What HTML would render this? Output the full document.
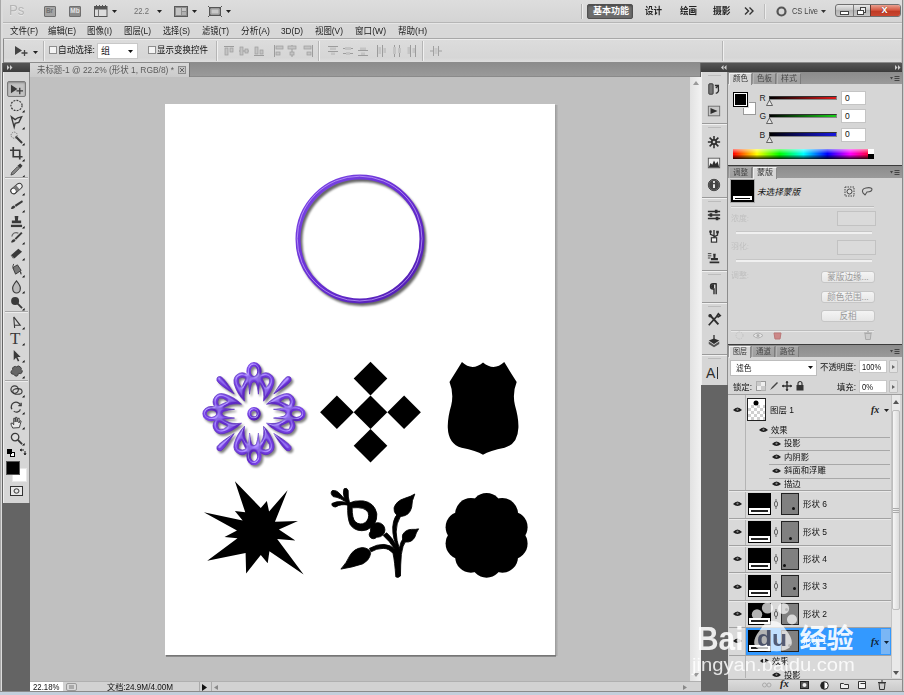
<!DOCTYPE html><html lang="zh-CN"><head><meta charset="utf-8"><title>Photoshop</title><style>
*{box-sizing:border-box;margin:0;padding:0}
html,body{width:904px;height:695px;overflow:hidden;background:#d4d4d4}
body{font-family:"Liberation Sans","Noto Sans CJK SC",sans-serif;font-size:11px;color:#111;position:relative}
.a{position:absolute}
.t{position:absolute;white-space:nowrap;line-height:1}
svg{position:absolute;overflow:visible}
</style></head><body>
<div class="a" style="left:0px;top:0px;width:904px;height:22px;background:linear-gradient(#dddddd,#d4d4d4);"></div>
<div class="a" style="left:0px;top:22px;width:904px;height:1px;background:#b6b6b6;"></div>
<div class="a" style="left:0px;top:23px;width:904px;height:1px;background:#e6e6e6;"></div>
<div class="a" style="left:0px;top:24px;width:904px;height:15px;background:#d8d8d8;"></div>
<div class="a" style="left:0px;top:38px;width:904px;height:1px;background:#a8a8a8;"></div>
<div class="a" style="left:3px;top:39px;width:899px;height:24px;background:linear-gradient(#dcdcdc,#d6d6d6 80%,#dedede);border:1px solid #c4c4c4;border-top-color:#ececec;border-bottom-color:#8c8c8c"></div>
<div class="a" style="left:0px;top:0px;width:1px;height:695px;background:#a8a8a8;"></div>
<div class="a" style="left:1px;top:0px;width:2px;height:695px;background:#dcdcdc;"></div>
<div class="a" style="left:3px;top:39px;width:1px;height:653px;background:#8a8a8a;"></div>
<div class="a" style="left:902px;top:0px;width:1px;height:695px;background:#8a8a8a;"></div>
<div class="a" style="left:903px;top:0px;width:1px;height:695px;background:#cdcdcd;"></div>
<div class="a" style="left:2px;top:63px;width:900px;height:628px;background:#646464;"></div>
<div class="a" style="left:30px;top:63px;width:670px;height:14px;background:linear-gradient(#8c8c8c,#9b9b9b);"></div>
<div class="a" style="left:30px;top:76px;width:670px;height:1px;background:#8a8a8a;"></div>
<div class="a" style="left:30px;top:77px;width:660px;height:604px;background:#c0c0c0;"></div>
<div class="a" style="left:690px;top:77px;width:11px;height:604px;background:linear-gradient(90deg,#e2e2e2,#f2f2f2);"></div>
<div class="t" style="left:9px;top:2px;font-size:15.5px;color:#b6b6b6;text-shadow:0 1px 0 #e6e6e6;transform-origin:0 50%;transform:scaleX(0.857);">Ps</div>
<div class="t" style="left:43.5px;top:6px;width:12px;height:10.5px;border:1px solid #6e6e6e;background:#a4a4a4;color:#707070;font-size:6.5px;font-weight:bold;line-height:8.5px;text-align:center;border-radius:1px">Br</div>
<div class="t" style="left:69px;top:6px;width:12px;height:10.5px;border:1px solid #6e6e6e;background:#8c8c8c;color:#e4e4e4;font-size:6.5px;font-weight:bold;line-height:8.5px;text-align:center;border-radius:1px">Mb</div>
<svg style="left:94px;top:5px;" width="14" height="12" viewBox="0 0 14 12"><rect x="0.5" y="1.5" width="12.5" height="10" fill="#dcdcdc" stroke="#555"/><rect x="0.5" y="1.5" width="12.5" height="3" fill="#555"/><path d="M4.5 4.5v7" stroke="#777" stroke-width="1"/><path d="M2.5 0v2M5.5 0v2M8.5 0v2M11.5 0v2" stroke="#555"/></svg>
<svg style="left:112px;top:10px;" width="5" height="3" viewBox="0 0 5 3"><polygon points="0,0 5,0 2.5,3" fill="#222"/></svg>
<div class="t" style="left:134px;top:7px;font-size:8.5px;color:#6e6e6e;transform-origin:0 50%;transform:scaleX(0.907);">22.2</div>
<svg style="left:156.5px;top:10px;" width="5" height="3" viewBox="0 0 5 3"><polygon points="0,0 5,0 2.5,3" fill="#222"/></svg>
<svg style="left:174px;top:5.5px;" width="14" height="11" viewBox="0 0 14 11"><rect x="0.5" y="0.5" width="13" height="10" fill="#8e8e8e" stroke="#5a5a5a"/><rect x="2" y="2" width="5" height="7" fill="#c4c4c4"/><rect x="8" y="2" width="4" height="3" fill="#c4c4c4"/><rect x="8" y="6" width="4" height="3" fill="#b0b0b0"/></svg>
<svg style="left:192px;top:10px;" width="5" height="3" viewBox="0 0 5 3"><polygon points="0,0 5,0 2.5,3" fill="#222"/></svg>
<svg style="left:208px;top:5.5px;" width="14" height="11" viewBox="0 0 14 11"><rect x="1.5" y="1.5" width="11" height="8" fill="#9a9a9a" stroke="#555"/><rect x="3.5" y="3.5" width="7" height="4" fill="#c8c8c8"/><path d="M0 0l2.5 2.5M14 0l-2.5 2.5M0 11l2.5-2.5M14 11l-2.5-2.5" stroke="#555"/></svg>
<svg style="left:226px;top:10px;" width="5" height="3" viewBox="0 0 5 3"><polygon points="0,0 5,0 2.5,3" fill="#222"/></svg>
<div class="a" style="left:581px;top:4px;width:1px;height:15px;background:#b0b0b0;"></div>
<div class="a" style="left:582px;top:4px;width:1px;height:15px;background:#ececec;"></div>
<div class="a" style="left:587px;top:4px;width:46px;height:15px;background:#6c6c6c;border:1px solid #505050;border-radius:2px;box-shadow:inset 0 1px 2px rgba(0,0,0,.35)"></div>
<div class="t" style="left:593px;top:7px;font-size:9px;color:#fff;font-weight:bold;transform-origin:0 50%;transform:scaleX(1.000);">基本功能</div>
<div class="t" style="left:645px;top:7px;font-size:9px;color:#222;font-weight:bold;transform-origin:0 50%;transform:scaleX(0.944);">设计</div>
<div class="t" style="left:679.5px;top:7px;font-size:9px;color:#222;font-weight:bold;transform-origin:0 50%;transform:scaleX(0.944);">绘画</div>
<div class="t" style="left:713px;top:7px;font-size:9px;color:#222;font-weight:bold;transform-origin:0 50%;transform:scaleX(0.971);">摄影</div>
<svg style="left:744px;top:7px;" width="10" height="8" viewBox="0 0 10 8"><path d="M1 0.5l3.5 3.5-3.5 3.5M5.5 0.5l3.5 3.5-3.5 3.5" fill="none" stroke="#333" stroke-width="1.4"/></svg>
<div class="a" style="left:764px;top:4px;width:1px;height:15px;background:#bcbcbc;"></div>
<div class="a" style="left:765px;top:4px;width:1px;height:15px;background:#ececec;"></div>
<svg style="left:776px;top:6px;" width="11" height="11" viewBox="0 0 11 11"><circle cx="5.5" cy="5.5" r="4" fill="none" stroke="#555" stroke-width="2.2"/></svg>
<div class="t" style="left:791.5px;top:7px;font-size:8.5px;color:#444;transform-origin:0 50%;transform:scaleX(0.873);">CS Live</div>
<svg style="left:821px;top:10px;" width="5" height="3" viewBox="0 0 5 3"><polygon points="0,0 5,0 2.5,3" fill="#333"/></svg>
<div class="a" style="left:834.5px;top:4px;width:66.5px;height:13px;border:1px solid #707070;border-radius:3px;background:linear-gradient(#e8e8e8,#c4c4c4 45%,#b4b4b4 50%,#c8c8c8);overflow:hidden"><div class="a" style="left:17px;top:0;width:1px;height:12px;background:#7a7a7a"></div><div class="a" style="left:34.5px;top:0;width:31px;height:12px;background:linear-gradient(#e8a090,#d4533c 45%,#bf3a24 50%,#cc4a34);border-left:1px solid #6b3a30"></div><div class="a" style="left:4.5px;top:5.5px;width:9px;height:4px;border:1px solid #444;background:#fff"></div><div class="a" style="left:24px;top:2px;width:6.5px;height:5.5px;border:1px solid #444;background:#eee"></div><div class="a" style="left:21.5px;top:4.5px;width:6.5px;height:5px;border:1px solid #444;background:#fff"></div><div class="t" style="left:46px;top:-1.5px;font-size:11px;font-weight:bold;color:#fff;text-shadow:0 0 1px #500">x</div></div>
<div class="t" style="left:10px;top:25.5px;font-size:9.5px;color:#222;transform-origin:0 50%;transform:scaleX(0.899);">文件(F)</div>
<div class="t" style="left:48px;top:25.5px;font-size:9.5px;color:#222;transform-origin:0 50%;transform:scaleX(0.884);">编辑(E)</div>
<div class="t" style="left:87px;top:25.5px;font-size:9.5px;color:#222;transform-origin:0 50%;transform:scaleX(0.894);">图像(I)</div>
<div class="t" style="left:124px;top:25.5px;font-size:9.5px;color:#222;transform-origin:0 50%;transform:scaleX(0.882);">图层(L)</div>
<div class="t" style="left:163px;top:25.5px;font-size:9.5px;color:#222;transform-origin:0 50%;transform:scaleX(0.852);">选择(S)</div>
<div class="t" style="left:202px;top:25.5px;font-size:9.5px;color:#222;transform-origin:0 50%;transform:scaleX(0.867);">滤镜(T)</div>
<div class="t" style="left:241px;top:25.5px;font-size:9.5px;color:#222;transform-origin:0 50%;transform:scaleX(0.916);">分析(A)</div>
<div class="t" style="left:281px;top:25.5px;font-size:9.5px;color:#222;transform-origin:0 50%;transform:scaleX(0.868);">3D(D)</div>
<div class="t" style="left:315px;top:25.5px;font-size:9.5px;color:#222;transform-origin:0 50%;transform:scaleX(0.884);">视图(V)</div>
<div class="t" style="left:355px;top:25.5px;font-size:9.5px;color:#222;transform-origin:0 50%;transform:scaleX(0.904);">窗口(W)</div>
<div class="t" style="left:398px;top:25.5px;font-size:9.5px;color:#222;transform-origin:0 50%;transform:scaleX(0.901);">帮助(H)</div>
<svg style="left:14px;top:45px;" width="14" height="12" viewBox="0 0 14 12"><polygon points="1,1 1,10 8,5.5" fill="#444"/><path d="M10.5 5v6M7.5 8h6" stroke="#444" stroke-width="1.3"/></svg>
<svg style="left:33px;top:51px;" width="5" height="3" viewBox="0 0 5 3"><polygon points="0,0 5,0 2.5,3" fill="#222"/></svg>
<div class="a" style="left:43px;top:41px;width:1px;height:20px;background:#b5b5b5;"></div>
<div class="a" style="left:44px;top:41px;width:1px;height:20px;background:#f0f0f0;"></div>
<div class="a" style="left:49px;top:46px;width:8px;height:8px;background:#f4f4f4;border:1px solid #8e8e8e"></div>
<div class="t" style="left:58px;top:46px;font-size:9px;color:#111;transform-origin:0 50%;transform:scaleX(0.961);">自动选择:</div>
<div class="a" style="left:97px;top:43px;width:41px;height:16px;background:#fff;border:1px solid #c8c8c8"></div>
<div class="t" style="left:101px;top:47px;font-size:9px;color:#111;">组</div>
<svg style="left:128px;top:50px;" width="5" height="3" viewBox="0 0 5 3"><polygon points="0,0 5,0 2.5,3" fill="#111"/></svg>
<div class="a" style="left:148px;top:46px;width:8px;height:8px;background:#f4f4f4;border:1px solid #8e8e8e"></div>
<div class="t" style="left:157px;top:46px;font-size:9px;color:#111;transform-origin:0 50%;transform:scaleX(0.944);">显示变换控件</div>
<div class="a" style="left:216px;top:41px;width:1px;height:20px;background:#b5b5b5;"></div>
<div class="a" style="left:217px;top:41px;width:1px;height:20px;background:#f0f0f0;"></div>
<svg style="left:224px;top:45px;" width="10" height="12" viewBox="0 0 10 12"><path d="M0 1.5h10" stroke="#9c9c9c"/><rect x="1" y="3" width="3" height="7" fill="#c4c4c4" stroke="#9c9c9c" stroke-width=".7"/><rect x="6" y="3" width="3" height="4" fill="#c4c4c4" stroke="#9c9c9c" stroke-width=".7"/></svg>
<svg style="left:239px;top:45px;" width="10" height="12" viewBox="0 0 10 12"><path d="M0 6h10" stroke="#9c9c9c"/><rect x="1" y="2" width="3" height="8" fill="#c4c4c4" stroke="#9c9c9c" stroke-width=".7"/><rect x="6" y="4" width="3" height="4" fill="#c4c4c4" stroke="#9c9c9c" stroke-width=".7"/></svg>
<svg style="left:254px;top:45px;" width="10" height="12" viewBox="0 0 10 12"><path d="M0 10.5h10" stroke="#9c9c9c"/><rect x="1" y="2" width="3" height="7" fill="#c4c4c4" stroke="#9c9c9c" stroke-width=".7"/><rect x="6" y="5" width="3" height="4" fill="#c4c4c4" stroke="#9c9c9c" stroke-width=".7"/></svg>
<svg style="left:273px;top:45px;" width="10" height="12" viewBox="0 0 10 12"><path d="M1.5 0v12" stroke="#9c9c9c"/><rect x="3" y="1" width="7" height="3" fill="#c4c4c4" stroke="#9c9c9c" stroke-width=".7"/><rect x="3" y="7" width="4" height="3" fill="#c4c4c4" stroke="#9c9c9c" stroke-width=".7"/></svg>
<svg style="left:287px;top:45px;" width="10" height="12" viewBox="0 0 10 12"><path d="M5 0v12" stroke="#9c9c9c"/><rect x="1" y="1" width="8" height="3" fill="#c4c4c4" stroke="#9c9c9c" stroke-width=".7"/><rect x="3" y="7" width="4" height="3" fill="#c4c4c4" stroke="#9c9c9c" stroke-width=".7"/></svg>
<svg style="left:303px;top:45px;" width="10" height="12" viewBox="0 0 10 12"><path d="M9.5 0v12" stroke="#9c9c9c"/><rect x="1" y="1" width="7" height="3" fill="#c4c4c4" stroke="#9c9c9c" stroke-width=".7"/><rect x="4" y="7" width="4" height="3" fill="#c4c4c4" stroke="#9c9c9c" stroke-width=".7"/></svg>
<svg style="left:328px;top:45px;" width="10" height="12" viewBox="0 0 10 12"><path d="M0 1.5h10M0 6.5h10" stroke="#9c9c9c"/><rect x="2" y="2.5" width="6" height="2.5" fill="#c4c4c4"/><rect x="3" y="7.5" width="4" height="2.5" fill="#c4c4c4"/></svg>
<svg style="left:343px;top:45px;" width="10" height="12" viewBox="0 0 10 12"><path d="M0 3.5h10M0 8.5h10" stroke="#9c9c9c"/><rect x="2" y="2" width="6" height="3" fill="#c4c4c4"/><rect x="3" y="7" width="4" height="3" fill="#c4c4c4"/></svg>
<svg style="left:358px;top:45px;" width="10" height="12" viewBox="0 0 10 12"><path d="M0 5.5h10M0 10.5h10" stroke="#9c9c9c"/><rect x="2" y="2.5" width="6" height="2.5" fill="#c4c4c4"/><rect x="3" y="7.5" width="4" height="2.5" fill="#c4c4c4"/></svg>
<svg style="left:376px;top:45px;" width="10" height="12" viewBox="0 0 10 12"><path d="M1.5 0v12M6.5 0v12" stroke="#9c9c9c"/><rect x="2.5" y="2" width="2.5" height="7" fill="#c4c4c4"/><rect x="7.5" y="3" width="2.5" height="5" fill="#c4c4c4"/></svg>
<svg style="left:391px;top:45px;" width="10" height="12" viewBox="0 0 10 12"><path d="M3.5 0v12M8.5 0v12" stroke="#9c9c9c"/><rect x="2" y="2" width="3" height="7" fill="#c4c4c4"/><rect x="7" y="3" width="3" height="5" fill="#c4c4c4"/></svg>
<svg style="left:406px;top:45px;" width="10" height="12" viewBox="0 0 10 12"><path d="M4.5 0v12M9.5 0v12" stroke="#9c9c9c"/><rect x="1.5" y="2" width="2.5" height="7" fill="#c4c4c4"/><rect x="6.5" y="3" width="2.5" height="5" fill="#c4c4c4"/></svg>
<div class="a" style="left:318px;top:41px;width:1px;height:20px;background:#b5b5b5;"></div>
<div class="a" style="left:319px;top:41px;width:1px;height:20px;background:#f0f0f0;"></div>
<div class="a" style="left:422px;top:41px;width:1px;height:20px;background:#b5b5b5;"></div>
<div class="a" style="left:423px;top:41px;width:1px;height:20px;background:#f0f0f0;"></div>
<svg style="left:430px;top:45px;" width="12" height="12" viewBox="0 0 12 12"><path d="M3.5 1v10M8.5 1v10" stroke="#a0a0a0"/><path d="M0 6h3M12 6h-3" stroke="#a0a0a0"/><rect x="4.5" y="3" width="3" height="6" fill="#c8c8c8"/></svg>
<div class="a" style="left:722px;top:41px;width:1px;height:20px;background:#b5b5b5;"></div>
<div class="a" style="left:723px;top:41px;width:1px;height:20px;background:#f0f0f0;"></div>
<div class="a" style="left:30px;top:63px;width:160px;height:14px;background:linear-gradient(#d8d8d8,#cbcbcb);border-right:1px solid #777"></div>
<div class="t" style="left:37px;top:66px;font-size:9px;color:#5a5a5a;transform-origin:0 50%;transform:scaleX(0.934);">未标题-1 @ 22.2% (形状 1, RGB/8) *</div>
<div class="a" style="left:178px;top:66px;width:8px;height:8px;background:#c4c4c4;border:1px solid #8a8a8a"></div>
<svg style="left:180px;top:68px;" width="4" height="4" viewBox="0 0 4 4"><path d="M0 0l4 4M4 0l-4 4" stroke="#666" stroke-width="1"/></svg>
<svg style="left:693px;top:81px;" width="6" height="5" viewBox="0 0 6 5"><polygon points="3,0 6,4 0,4" fill="#9a9a9a"/></svg>
<svg style="left:693px;top:673px;" width="6" height="5" viewBox="0 0 6 5"><polygon points="0,0 6,0 3,4" fill="#9a9a9a"/></svg>
<div class="a" style="left:30px;top:681px;width:671px;height:11px;background:#d2d2d2;border-top:1px solid #b0b0b0"></div>
<div class="a" style="left:30px;top:682px;width:33px;height:10px;background:#fff;"></div>
<div class="t" style="left:32.5px;top:683px;font-size:8.5px;color:#111;transform-origin:0 50%;transform:scaleX(0.919);">22.18%</div>
<div class="a" style="left:66px;top:683px;width:11px;height:8px;background:#d8d8d8;border:1px solid #999;border-radius:2px"></div>
<div class="a" style="left:69px;top:685px;width:5px;height:4px;background:#aaa;"></div>
<div class="t" style="left:106.5px;top:683px;font-size:8.5px;color:#111;transform-origin:0 50%;transform:scaleX(0.957);">文档:24.9M/4.00M</div>
<svg style="left:202px;top:683.5px;" width="6" height="7" viewBox="0 0 6 7"><polygon points="0,0 5,3.5 0,7" fill="#111"/></svg>
<div class="a" style="left:199px;top:682px;width:1px;height:10px;background:#aaa;"></div>
<div class="a" style="left:211px;top:682px;width:1px;height:10px;background:#aaa;"></div>
<svg style="left:214px;top:684.5px;" width="5" height="5" viewBox="0 0 5 5"><polygon points="4,0 4,5 0,2.5" fill="#888"/></svg>
<svg style="left:683px;top:684.5px;" width="5" height="5" viewBox="0 0 5 5"><polygon points="0,0 0,5 4,2.5" fill="#888"/></svg>
<div class="a" style="left:555px;top:105px;width:3px;height:551px;background:linear-gradient(90deg,#9a9a9a,#bababa);"></div>
<div class="a" style="left:166px;top:655px;width:390px;height:2px;background:linear-gradient(#6c6c6c,#969696);"></div>
<div class="a" style="left:165px;top:104px;width:390px;height:551px;background:#fff;"></div>
<svg style="left:0px;top:0px;" width="904" height="695" viewBox="0 0 904 695"><defs>
<filter id="ds" x="-20%" y="-20%" width="140%" height="140%"><feGaussianBlur stdDeviation="1.2"/></filter><filter id="bev" x="-10%" y="-10%" width="120%" height="120%"><feGaussianBlur in="SourceAlpha" stdDeviation="0.9" result="b"/><feSpecularLighting in="b" surfaceScale="2.5" specularConstant="0.45" specularExponent="10" lighting-color="#e0d0ff" result="s"><feDistantLight azimuth="235" elevation="42"/></feSpecularLighting><feComposite in="s" in2="SourceAlpha" operator="in" result="s2"/><feComposite in="SourceGraphic" in2="s2" operator="arithmetic" k1="0" k2="1" k3="1" k4="0"/></filter>
<linearGradient id="pg" x1="0" y1="0" x2="1" y2="1"><stop offset="0" stop-color="#7c48e6"/><stop offset=".5" stop-color="#672dd3"/><stop offset="1" stop-color="#4f1cae"/></linearGradient>
</defs><circle cx="362" cy="241.5" r="62" fill="none" stroke="#000" stroke-opacity=".6" stroke-width="4.8" filter="url(#ds)"/><circle cx="360" cy="239" r="62" fill="none" stroke="url(#pg)" stroke-width="5"/><circle cx="359.6" cy="238.6" r="62.4" fill="none" stroke="#c9a8ff" stroke-opacity=".7" stroke-width="1"/><polygon points="353.7,412.2 370.5,395.4 387.3,412.2 370.5,429.0" fill="#000"/><polygon points="320.1,412.2 336.9,395.4 353.7,412.2 336.9,429.0" fill="#000"/><polygon points="387.3,412.2 404.1,395.4 420.9,412.2 404.1,429.0" fill="#000"/><polygon points="353.7,378.6 370.5,361.8 387.3,378.6 370.5,395.4" fill="#000"/><polygon points="353.7,445.8 370.5,429.0 387.3,445.8 370.5,462.6" fill="#000"/><g transform="translate(430,350) scale(0.17266)"><path d="M185,70 Q245,125 307,72 Q370,125 430,70 Q468,132 502,185 Q476,250 492,320 Q514,395 512,450 Q508,545 432,566 Q345,584 307,606 Q269,584 183,566 Q107,545 103,450 Q101,395 123,320 Q139,250 113,185 Q147,132 185,70Z" fill="#000"/></g><g transform="translate(190,470) scale(0.17266)"><polygon points="260,65 410,220 445,180 458,240 565,118 492,300 625,295 515,345 610,408 505,400 658,605 460,470 450,540 410,492 325,600 322,480 100,525 275,395 200,388 272,350 80,245 305,292 260,238 320,245" fill="#000"/></g><circle cx="486.6" cy="535.4" r="29.6" fill="#000"/><circle cx="486.6" cy="508.8" r="15.7" fill="#000"/><circle cx="470.9" cy="513.8" r="15.7" fill="#000"/><circle cx="461.3" cy="527.2" r="15.7" fill="#000"/><circle cx="461.3" cy="543.6" r="15.7" fill="#000"/><circle cx="470.9" cy="557.0" r="15.7" fill="#000"/><circle cx="486.6" cy="562.0" r="15.7" fill="#000"/><circle cx="502.3" cy="557.0" r="15.7" fill="#000"/><circle cx="511.9" cy="543.6" r="15.7" fill="#000"/><circle cx="511.9" cy="527.2" r="15.7" fill="#000"/><circle cx="502.3" cy="513.8" r="15.7" fill="#000"/><g transform="translate(315,475) scale(0.17266)" fill="#000" stroke="#000" stroke-width="5" stroke-linejoin="round">
<path d="M468,590 Q462,500 452,455 Q430,425 395,425 Q355,425 325,445 L315,425 Q360,400 400,402 Q440,405 462,430 Q430,380 395,350 L415,335 Q450,365 470,410 Q440,330 455,270 Q465,235 480,225 L495,240 Q470,280 470,330 Q472,380 488,425 Q495,385 515,360 L530,375 Q505,410 500,460 Q495,520 495,585 Q482,598 468,590Z"/>
<path d="M578,110 Q560,150 560,185 Q550,235 500,240 Q455,235 458,190 Q470,150 520,135 Q555,125 578,110Z"/>
<path d="M600,312 Q585,335 578,360 Q560,392 525,388 Q500,375 508,345 Q525,315 560,315 Q585,316 600,312Z"/>
<path d="M150,545 Q185,505 200,470 Q225,425 275,420 Q320,425 322,455 Q315,495 275,515 Q215,535 150,545Z"/>
<circle cx="363" cy="318" r="42"/><circle cx="338" cy="345" r="24"/>
<path d="M190,165 Q230,145 280,150 Q345,160 358,225 Q362,290 300,318 Q240,335 205,290 Q185,250 190,165Z M215,190 Q215,250 232,270 Q260,295 292,275 Q318,252 308,218 Q292,183 215,190Z" fill-rule="evenodd"/>
<path d="M195,170 Q150,130 105,125 Q85,105 100,90 Q125,85 150,115 Q160,130 170,135 Q160,100 168,80 Q185,70 192,90 Q190,130 200,160Z"/>
<path d="M195,175 Q150,165 120,185 Q95,185 98,165 Q125,150 160,155 Q185,158 200,165Z"/>
</g><g opacity=".5" filter="url(#ds)"><g transform="translate(255.8,415.7)" fill="#000" stroke="#000" stroke-width=".7" stroke-linejoin="round" fill-rule="evenodd"><g transform="rotate(0)"><ellipse cx="0" cy="-42.5" rx="5.4" ry="6.9" fill="none" stroke="#000" stroke-width="4.4"/><path d="M-6,-36 L-4.4,-19.5 Q-3.6,-27 -2.4,-30 Q0,-34 2.4,-30 Q3.600,-27 4.4,-19.5 L6,-36Z"/><g transform="scale(1,1)"><path d="M-4.5,-36.5 Q-9,-42.5 -14.5,-40.5 Q-21.5,-37.5 -19.800,-30 Q-17,-20 -9.5,-12.5 Q-10.800,-22 -7.5,-27.5 Q-5,-31 -4.5,-36.5Z M-8,-35.300 Q-12,-37.5 -15.600,-35 Q-16.800,-31 -12.300,-26 Q-10.200,-31 -8,-35.300Z"/></g><g transform="scale(-1,1)"><path d="M-4.5,-36.5 Q-9,-42.5 -14.5,-40.5 Q-21.5,-37.5 -19.800,-30 Q-17,-20 -9.5,-12.5 Q-10.800,-22 -7.5,-27.5 Q-5,-31 -4.5,-36.5Z M-8,-35.300 Q-12,-37.5 -15.600,-35 Q-16.800,-31 -12.300,-26 Q-10.200,-31 -8,-35.300Z"/></g></g><g transform="rotate(90)"><ellipse cx="0" cy="-42.5" rx="5.4" ry="6.9" fill="none" stroke="#000" stroke-width="4.4"/><path d="M-6,-36 L-4.4,-19.5 Q-3.6,-27 -2.4,-30 Q0,-34 2.4,-30 Q3.600,-27 4.4,-19.5 L6,-36Z"/><g transform="scale(1,1)"><path d="M-4.5,-36.5 Q-9,-42.5 -14.5,-40.5 Q-21.5,-37.5 -19.800,-30 Q-17,-20 -9.5,-12.5 Q-10.800,-22 -7.5,-27.5 Q-5,-31 -4.5,-36.5Z M-8,-35.300 Q-12,-37.5 -15.600,-35 Q-16.800,-31 -12.300,-26 Q-10.200,-31 -8,-35.300Z"/></g><g transform="scale(-1,1)"><path d="M-4.5,-36.5 Q-9,-42.5 -14.5,-40.5 Q-21.5,-37.5 -19.800,-30 Q-17,-20 -9.5,-12.5 Q-10.800,-22 -7.5,-27.5 Q-5,-31 -4.5,-36.5Z M-8,-35.300 Q-12,-37.5 -15.600,-35 Q-16.800,-31 -12.300,-26 Q-10.200,-31 -8,-35.300Z"/></g></g><g transform="rotate(180)"><ellipse cx="0" cy="-42.5" rx="5.4" ry="6.9" fill="none" stroke="#000" stroke-width="4.4"/><path d="M-6,-36 L-4.4,-19.5 Q-3.6,-27 -2.4,-30 Q0,-34 2.4,-30 Q3.600,-27 4.4,-19.5 L6,-36Z"/><g transform="scale(1,1)"><path d="M-4.5,-36.5 Q-9,-42.5 -14.5,-40.5 Q-21.5,-37.5 -19.800,-30 Q-17,-20 -9.5,-12.5 Q-10.800,-22 -7.5,-27.5 Q-5,-31 -4.5,-36.5Z M-8,-35.300 Q-12,-37.5 -15.600,-35 Q-16.800,-31 -12.300,-26 Q-10.200,-31 -8,-35.300Z"/></g><g transform="scale(-1,1)"><path d="M-4.5,-36.5 Q-9,-42.5 -14.5,-40.5 Q-21.5,-37.5 -19.800,-30 Q-17,-20 -9.5,-12.5 Q-10.800,-22 -7.5,-27.5 Q-5,-31 -4.5,-36.5Z M-8,-35.300 Q-12,-37.5 -15.600,-35 Q-16.800,-31 -12.300,-26 Q-10.200,-31 -8,-35.300Z"/></g></g><g transform="rotate(270)"><ellipse cx="0" cy="-42.5" rx="5.4" ry="6.9" fill="none" stroke="#000" stroke-width="4.4"/><path d="M-6,-36 L-4.4,-19.5 Q-3.6,-27 -2.4,-30 Q0,-34 2.4,-30 Q3.600,-27 4.4,-19.5 L6,-36Z"/><g transform="scale(1,1)"><path d="M-4.5,-36.5 Q-9,-42.5 -14.5,-40.5 Q-21.5,-37.5 -19.800,-30 Q-17,-20 -9.5,-12.5 Q-10.800,-22 -7.5,-27.5 Q-5,-31 -4.5,-36.5Z M-8,-35.300 Q-12,-37.5 -15.600,-35 Q-16.800,-31 -12.300,-26 Q-10.200,-31 -8,-35.300Z"/></g><g transform="scale(-1,1)"><path d="M-4.5,-36.5 Q-9,-42.5 -14.5,-40.5 Q-21.5,-37.5 -19.800,-30 Q-17,-20 -9.5,-12.5 Q-10.800,-22 -7.5,-27.5 Q-5,-31 -4.5,-36.5Z M-8,-35.300 Q-12,-37.5 -15.600,-35 Q-16.800,-31 -12.300,-26 Q-10.200,-31 -8,-35.300Z"/></g></g><g transform="rotate(45)"><path d="M0,-28 Q-4,-45 -2.800,-49.5 Q0,-53.5 2.800,-49.5 Q4,-45 0,-28Z"/></g><g transform="rotate(135)"><path d="M0,-28 Q-4,-45 -2.800,-49.5 Q0,-53.5 2.800,-49.5 Q4,-45 0,-28Z"/></g><g transform="rotate(225)"><path d="M0,-28 Q-4,-45 -2.800,-49.5 Q0,-53.5 2.800,-49.5 Q4,-45 0,-28Z"/></g><g transform="rotate(315)"><path d="M0,-28 Q-4,-45 -2.800,-49.5 Q0,-53.5 2.800,-49.5 Q4,-45 0,-28Z"/></g><circle cx="0" cy="0" r="4.7" fill="none" stroke="#000" stroke-width="4.2"/></g></g><g filter="url(#bev)"><g transform="translate(254,413.7)" fill="url(#pg)" stroke="#5a28c0" stroke-width=".7" stroke-linejoin="round" fill-rule="evenodd"><g transform="rotate(0)"><ellipse cx="0" cy="-42.5" rx="5.4" ry="6.9" fill="none" stroke="url(#pg)" stroke-width="4.4"/><path d="M-6,-36 L-4.4,-19.5 Q-3.6,-27 -2.4,-30 Q0,-34 2.4,-30 Q3.600,-27 4.4,-19.5 L6,-36Z"/><g transform="scale(1,1)"><path d="M-4.5,-36.5 Q-9,-42.5 -14.5,-40.5 Q-21.5,-37.5 -19.800,-30 Q-17,-20 -9.5,-12.5 Q-10.800,-22 -7.5,-27.5 Q-5,-31 -4.5,-36.5Z M-8,-35.300 Q-12,-37.5 -15.600,-35 Q-16.800,-31 -12.300,-26 Q-10.200,-31 -8,-35.300Z"/></g><g transform="scale(-1,1)"><path d="M-4.5,-36.5 Q-9,-42.5 -14.5,-40.5 Q-21.5,-37.5 -19.800,-30 Q-17,-20 -9.5,-12.5 Q-10.800,-22 -7.5,-27.5 Q-5,-31 -4.5,-36.5Z M-8,-35.300 Q-12,-37.5 -15.600,-35 Q-16.800,-31 -12.300,-26 Q-10.200,-31 -8,-35.300Z"/></g></g><g transform="rotate(90)"><ellipse cx="0" cy="-42.5" rx="5.4" ry="6.9" fill="none" stroke="url(#pg)" stroke-width="4.4"/><path d="M-6,-36 L-4.4,-19.5 Q-3.6,-27 -2.4,-30 Q0,-34 2.4,-30 Q3.600,-27 4.4,-19.5 L6,-36Z"/><g transform="scale(1,1)"><path d="M-4.5,-36.5 Q-9,-42.5 -14.5,-40.5 Q-21.5,-37.5 -19.800,-30 Q-17,-20 -9.5,-12.5 Q-10.800,-22 -7.5,-27.5 Q-5,-31 -4.5,-36.5Z M-8,-35.300 Q-12,-37.5 -15.600,-35 Q-16.800,-31 -12.300,-26 Q-10.200,-31 -8,-35.300Z"/></g><g transform="scale(-1,1)"><path d="M-4.5,-36.5 Q-9,-42.5 -14.5,-40.5 Q-21.5,-37.5 -19.800,-30 Q-17,-20 -9.5,-12.5 Q-10.800,-22 -7.5,-27.5 Q-5,-31 -4.5,-36.5Z M-8,-35.300 Q-12,-37.5 -15.600,-35 Q-16.800,-31 -12.300,-26 Q-10.200,-31 -8,-35.300Z"/></g></g><g transform="rotate(180)"><ellipse cx="0" cy="-42.5" rx="5.4" ry="6.9" fill="none" stroke="url(#pg)" stroke-width="4.4"/><path d="M-6,-36 L-4.4,-19.5 Q-3.6,-27 -2.4,-30 Q0,-34 2.4,-30 Q3.600,-27 4.4,-19.5 L6,-36Z"/><g transform="scale(1,1)"><path d="M-4.5,-36.5 Q-9,-42.5 -14.5,-40.5 Q-21.5,-37.5 -19.800,-30 Q-17,-20 -9.5,-12.5 Q-10.800,-22 -7.5,-27.5 Q-5,-31 -4.5,-36.5Z M-8,-35.300 Q-12,-37.5 -15.600,-35 Q-16.800,-31 -12.300,-26 Q-10.200,-31 -8,-35.300Z"/></g><g transform="scale(-1,1)"><path d="M-4.5,-36.5 Q-9,-42.5 -14.5,-40.5 Q-21.5,-37.5 -19.800,-30 Q-17,-20 -9.5,-12.5 Q-10.800,-22 -7.5,-27.5 Q-5,-31 -4.5,-36.5Z M-8,-35.300 Q-12,-37.5 -15.600,-35 Q-16.800,-31 -12.300,-26 Q-10.200,-31 -8,-35.300Z"/></g></g><g transform="rotate(270)"><ellipse cx="0" cy="-42.5" rx="5.4" ry="6.9" fill="none" stroke="url(#pg)" stroke-width="4.4"/><path d="M-6,-36 L-4.4,-19.5 Q-3.6,-27 -2.4,-30 Q0,-34 2.4,-30 Q3.600,-27 4.4,-19.5 L6,-36Z"/><g transform="scale(1,1)"><path d="M-4.5,-36.5 Q-9,-42.5 -14.5,-40.5 Q-21.5,-37.5 -19.800,-30 Q-17,-20 -9.5,-12.5 Q-10.800,-22 -7.5,-27.5 Q-5,-31 -4.5,-36.5Z M-8,-35.300 Q-12,-37.5 -15.600,-35 Q-16.800,-31 -12.300,-26 Q-10.200,-31 -8,-35.300Z"/></g><g transform="scale(-1,1)"><path d="M-4.5,-36.5 Q-9,-42.5 -14.5,-40.5 Q-21.5,-37.5 -19.800,-30 Q-17,-20 -9.5,-12.5 Q-10.800,-22 -7.5,-27.5 Q-5,-31 -4.5,-36.5Z M-8,-35.300 Q-12,-37.5 -15.600,-35 Q-16.800,-31 -12.300,-26 Q-10.200,-31 -8,-35.300Z"/></g></g><g transform="rotate(45)"><path d="M0,-28 Q-4,-45 -2.800,-49.5 Q0,-53.5 2.800,-49.5 Q4,-45 0,-28Z"/></g><g transform="rotate(135)"><path d="M0,-28 Q-4,-45 -2.800,-49.5 Q0,-53.5 2.800,-49.5 Q4,-45 0,-28Z"/></g><g transform="rotate(225)"><path d="M0,-28 Q-4,-45 -2.800,-49.5 Q0,-53.5 2.800,-49.5 Q4,-45 0,-28Z"/></g><g transform="rotate(315)"><path d="M0,-28 Q-4,-45 -2.800,-49.5 Q0,-53.5 2.800,-49.5 Q4,-45 0,-28Z"/></g><circle cx="0" cy="0" r="4.7" fill="none" stroke="url(#pg)" stroke-width="4.2"/></g></g></svg>
<div class="a" style="left:3px;top:63px;width:27px;height:9px;background:linear-gradient(#565656,#3c3c3c);"></div>
<svg style="left:7px;top:65px;" width="6" height="5" viewBox="0 0 6 5"><path d="M0 0l2.5 2.5-2.5 2.5zM3 0l2.5 2.5-2.5 2.5z" fill="#d0d0d0"/></svg>
<div class="a" style="left:3px;top:72px;width:27px;height:431px;background:#d6d6d6;border-right:1px solid #8a8a8a;border-left:1px solid #efefef"></div>
<div class="a" style="left:7px;top:81px;width:19px;height:16px;background:#c2c2c2;border:1px solid #7a7a7a;border-radius:2px;box-shadow:inset 0 1px 2px rgba(0,0,0,.3)"></div>
<svg style="left:9.5px;top:82.5px;" width="13" height="13" viewBox="0 0 14 14"><polygon points="1,2 1,11 8,6.5" fill="#3a3a3a"/><path d="M10.5 5v7M7 8.5h7" stroke="#3a3a3a" stroke-width="1.4"/></svg>
<svg style="left:9.5px;top:98.5px;" width="13" height="13" viewBox="0 0 14 14"><ellipse cx="7" cy="7" rx="6" ry="5.5" fill="none" stroke="#3a3a3a" stroke-width="1.3" stroke-dasharray="2 1.3"/></svg>
<svg style="left:21.7px;top:110px;" width="2.6" height="2.6" viewBox="0 0 2.6 2.6"><polygon points="2.6,0 2.6,2.6 0,2.6" fill="#111"/></svg>
<svg style="left:9.5px;top:115.0px;" width="13" height="13" viewBox="0 0 14 14"><path d="M1.5 2l4 3 3-2 4-1-3 6-4 1-1 4z" fill="none" stroke="#3a3a3a" stroke-width="1.5"/></svg>
<svg style="left:21.7px;top:126.5px;" width="2.6" height="2.6" viewBox="0 0 2.6 2.6"><polygon points="2.6,0 2.6,2.6 0,2.6" fill="#111"/></svg>
<svg style="left:9.5px;top:131.0px;" width="13" height="13" viewBox="0 0 14 14"><path d="M6 6l7 7" stroke="#3a3a3a" stroke-width="2.2"/><circle cx="4.5" cy="4.5" r="3.3" fill="none" stroke="#777" stroke-width="1" stroke-dasharray="1.5 1"/></svg>
<svg style="left:21.7px;top:142.5px;" width="2.6" height="2.6" viewBox="0 0 2.6 2.6"><polygon points="2.6,0 2.6,2.6 0,2.6" fill="#111"/></svg>
<svg style="left:9.5px;top:147.0px;" width="13" height="13" viewBox="0 0 14 14"><path d="M3.5 0v10.5h10M0 3.5h10.5v10" fill="none" stroke="#3a3a3a" stroke-width="1.8"/></svg>
<svg style="left:21.7px;top:158.5px;" width="2.6" height="2.6" viewBox="0 0 2.6 2.6"><polygon points="2.6,0 2.6,2.6 0,2.6" fill="#111"/></svg>
<svg style="left:9.5px;top:163.0px;" width="13" height="13" viewBox="0 0 14 14"><path d="M1 13l1-3 6-6 2 2-6 6z" fill="#888" stroke="#3a3a3a" stroke-width=".8"/><path d="M8 3l3-2.5 2.5 2.5-2.5 3z" fill="#3a3a3a"/></svg>
<svg style="left:21.7px;top:174.5px;" width="2.6" height="2.6" viewBox="0 0 2.6 2.6"><polygon points="2.6,0 2.6,2.6 0,2.6" fill="#111"/></svg>
<div class="a" style="left:5px;top:177px;width:23px;height:1px;background:#a8a8a8;"></div>
<div class="a" style="left:5px;top:178px;width:23px;height:1px;background:#ececec;"></div>
<svg style="left:9.5px;top:181.5px;" width="13" height="13" viewBox="0 0 14 14"><g transform="rotate(-40 7 7)"><rect x="0" y="4" width="14" height="6" rx="3" fill="#eee" stroke="#3a3a3a" stroke-width="1"/><rect x="0" y="4" width="6" height="6" rx="3" fill="#fff" stroke="#3a3a3a"/><rect x="5" y="4" width="4" height="6" fill="#777"/></g></svg>
<svg style="left:21.7px;top:193px;" width="2.6" height="2.6" viewBox="0 0 2.6 2.6"><polygon points="2.6,0 2.6,2.6 0,2.6" fill="#111"/></svg>
<svg style="left:9.5px;top:198.0px;" width="13" height="13" viewBox="0 0 14 14"><path d="M1 11.5q.5-3 3-3.5l2 1.5q-1.5 3-5 2z" fill="#3a3a3a"/><path d="M5 7.5l8-5 1 1.800-7.5 5z" fill="#3a3a3a"/></svg>
<svg style="left:21.7px;top:209.5px;" width="2.6" height="2.6" viewBox="0 0 2.6 2.6"><polygon points="2.6,0 2.6,2.6 0,2.6" fill="#111"/></svg>
<svg style="left:9.5px;top:214.5px;" width="13" height="13" viewBox="0 0 14 14"><path d="M5 1h4l-.5 5h3.5v3h-10v-3h3.5z" fill="#3a3a3a"/><rect x="1" y="10.5" width="12" height="2.5" fill="#3a3a3a"/></svg>
<svg style="left:21.7px;top:226px;" width="2.6" height="2.6" viewBox="0 0 2.6 2.6"><polygon points="2.6,0 2.6,2.6 0,2.6" fill="#111"/></svg>
<svg style="left:9.5px;top:230.5px;" width="13" height="13" viewBox="0 0 14 14"><path d="M1 12q1-3 3.5-3.5l1.5 1.5q-1 3-5 2z" fill="#3a3a3a"/><path d="M5 8l7-7 1.5 1.5-7 7z" fill="#3a3a3a"/><path d="M2 6a4.5 4.5 0 0 1 7-3.5" fill="none" stroke="#666" stroke-width="1.300"/></svg>
<svg style="left:21.7px;top:242px;" width="2.6" height="2.6" viewBox="0 0 2.6 2.6"><polygon points="2.6,0 2.6,2.6 0,2.6" fill="#111"/></svg>
<svg style="left:9.5px;top:246.5px;" width="13" height="13" viewBox="0 0 14 14"><path d="M1 9l8-7 4 3-8 7h-2z" fill="#3a3a3a"/><path d="M1 9l3 3" stroke="#999"/></svg>
<svg style="left:21.7px;top:258px;" width="2.6" height="2.6" viewBox="0 0 2.6 2.6"><polygon points="2.6,0 2.6,2.6 0,2.6" fill="#111"/></svg>
<svg style="left:9.5px;top:263.0px;" width="13" height="13" viewBox="0 0 14 14"><path d="M3 5l5-3 4 6-6 4z" fill="#777" stroke="#3a3a3a" stroke-width="1"/><path d="M4 1q-2 3 0 5" fill="none" stroke="#3a3a3a"/><path d="M11 8q2 2 1 5-2-2-1-5z" fill="#3a3a3a"/></svg>
<svg style="left:21.7px;top:274.5px;" width="2.6" height="2.6" viewBox="0 0 2.6 2.6"><polygon points="2.6,0 2.6,2.6 0,2.6" fill="#111"/></svg>
<svg style="left:9.5px;top:279.5px;" width="13" height="13" viewBox="0 0 14 14"><path d="M7 1q5 6 4 9a4 4 0 0 1-8 0q-1-3 4-9z" fill="#bbb" stroke="#3a3a3a" stroke-width="1.2"/></svg>
<svg style="left:21.7px;top:291px;" width="2.6" height="2.6" viewBox="0 0 2.6 2.6"><polygon points="2.6,0 2.6,2.6 0,2.6" fill="#111"/></svg>
<svg style="left:9.5px;top:296.0px;" width="13" height="13" viewBox="0 0 14 14"><circle cx="5.5" cy="5.5" r="4.300" fill="#3a3a3a"/><path d="M8 8l5 5" stroke="#3a3a3a" stroke-width="2"/></svg>
<svg style="left:21.7px;top:307.5px;" width="2.6" height="2.6" viewBox="0 0 2.6 2.6"><polygon points="2.6,0 2.6,2.6 0,2.6" fill="#111"/></svg>
<div class="a" style="left:5px;top:311px;width:23px;height:1px;background:#a8a8a8;"></div>
<div class="a" style="left:5px;top:312px;width:23px;height:1px;background:#ececec;"></div>
<svg style="left:9.5px;top:315.5px;" width="13" height="13" viewBox="0 0 14 14"><path d="M4 1l1 12M4 1l7 9-6 0" fill="none" stroke="#3a3a3a" stroke-width="1.2"/></svg>
<svg style="left:21.7px;top:327px;" width="2.6" height="2.6" viewBox="0 0 2.6 2.6"><polygon points="2.6,0 2.6,2.6 0,2.6" fill="#111"/></svg>
<div class="t" style="left:10px;top:330px;font-family:'Liberation Serif',serif;font-size:17px;color:#3a3a3a">T</div>
<svg style="left:21.7px;top:343px;" width="2.6" height="2.6" viewBox="0 0 2.6 2.6"><polygon points="2.6,0 2.6,2.6 0,2.6" fill="#111"/></svg>
<svg style="left:9.5px;top:348.5px;" width="13" height="13" viewBox="0 0 14 14"><path d="M4 1v11l2.5-2.5 2 4 1.5-.8-2-4h3.5z" fill="#3a3a3a"/></svg>
<svg style="left:21.7px;top:360px;" width="2.6" height="2.6" viewBox="0 0 2.6 2.6"><polygon points="2.6,0 2.6,2.6 0,2.6" fill="#111"/></svg>
<svg style="left:9.5px;top:364.5px;" width="13" height="13" viewBox="0 0 14 14"><path d="M7 2q2-2 4 0t1 3q2 1 1 3t-4 1q0 3-2 3t-3-2q-3 0-3-2t2-3q-1-2 1-3t3 0z" fill="#666" stroke="#3a3a3a" stroke-width="1"/></svg>
<svg style="left:21.7px;top:376px;" width="2.6" height="2.6" viewBox="0 0 2.6 2.6"><polygon points="2.6,0 2.6,2.6 0,2.6" fill="#111"/></svg>
<div class="a" style="left:5px;top:380px;width:23px;height:1px;background:#a8a8a8;"></div>
<div class="a" style="left:5px;top:381px;width:23px;height:1px;background:#ececec;"></div>
<svg style="left:9.5px;top:383.5px;" width="13" height="13" viewBox="0 0 14 14"><circle cx="5" cy="6" r="4" fill="none" stroke="#3a3a3a" stroke-width="1.300"/><ellipse cx="8" cy="8" rx="5" ry="3" fill="none" stroke="#3a3a3a" stroke-width="1.200"/></svg>
<svg style="left:21.7px;top:395px;" width="2.6" height="2.6" viewBox="0 0 2.6 2.6"><polygon points="2.6,0 2.6,2.6 0,2.6" fill="#111"/></svg>
<svg style="left:9.5px;top:400.0px;" width="13" height="13" viewBox="0 0 14 14"><path d="M2 10a5 5 0 0 1 9-5M12 3v3h-3" fill="none" stroke="#3a3a3a" stroke-width="1.400"/><path d="M4 12a4 3 0 0 0 7-2" fill="none" stroke="#3a3a3a" stroke-width="1.300"/></svg>
<svg style="left:21.7px;top:411.5px;" width="2.6" height="2.6" viewBox="0 0 2.6 2.6"><polygon points="2.6,0 2.6,2.6 0,2.6" fill="#111"/></svg>
<svg style="left:9.5px;top:415.5px;" width="13" height="13" viewBox="0 0 14 14"><path d="M3 13q-2-3-2-5l1.5-.5 1.5 2v-7h1.5v4l.5-5h1.5v5l1-4h1.5l-.5 5 1.5-2.5 1 .5q-1 4-2 7z" fill="#e8e8e8" stroke="#3a3a3a" stroke-width="1"/></svg>
<svg style="left:21.7px;top:427px;" width="2.6" height="2.6" viewBox="0 0 2.6 2.6"><polygon points="2.6,0 2.6,2.6 0,2.6" fill="#111"/></svg>
<svg style="left:9.5px;top:431.5px;" width="13" height="13" viewBox="0 0 14 14"><circle cx="5.5" cy="5.5" r="4" fill="#ddd" stroke="#3a3a3a" stroke-width="1.400"/><path d="M8.5 8.5l4.5 4.5" stroke="#3a3a3a" stroke-width="2"/></svg>
<svg style="left:21.7px;top:443px;" width="2.6" height="2.6" viewBox="0 0 2.6 2.6"><polygon points="2.6,0 2.6,2.6 0,2.6" fill="#111"/></svg>
<div class="a" style="left:7px;top:449px;width:5px;height:5px;background:#000;"></div>
<div class="a" style="left:10px;top:452px;width:5px;height:5px;background:#fff;border:1px solid #000"></div>
<div class="a" style="left:7px;top:449px;width:5px;height:5px;background:#000;"></div>
<svg style="left:19px;top:449px;" width="7" height="7" viewBox="0 0 7 7"><path d="M1 1h4M3 0l-2 1 2 1M6 2v4M5 4l1 2 1-2" fill="none" stroke="#222" stroke-width="1"/></svg>
<div class="a" style="left:12px;top:468px;width:15px;height:14px;background:#fff;border:1px solid #e8e8e8"></div>
<div class="a" style="left:6px;top:461px;width:14px;height:14px;background:#000;border:1px solid #555"></div>
<div class="a" style="left:10px;top:486px;width:13px;height:10px;background:#e8e8e8;border:1px solid #333"></div>
<svg style="left:13px;top:488px;" width="7" height="6" viewBox="0 0 7 6"><ellipse cx="3.5" cy="3" rx="2.5" ry="2.200" fill="none" stroke="#333"/></svg>
<div class="a" style="left:701px;top:63px;width:201px;height:9px;background:linear-gradient(#565656,#3c3c3c);"></div>
<svg style="left:721px;top:65px;" width="6" height="5" viewBox="0 0 6 5"><path d="M2.5 0l-2.5 2.5 2.5 2.5zM5.5 0l-2.5 2.5 2.5 2.5z" fill="#d0d0d0"/></svg>
<svg style="left:895px;top:65px;" width="6" height="5" viewBox="0 0 6 5"><path d="M0 0l2.5 2.5-2.5 2.5zM3 0l2.5 2.5-2.5 2.5z" fill="#d0d0d0"/></svg>
<div class="a" style="left:701px;top:72px;width:27px;height:313px;background:#d6d6d6;border-right:1px solid #8c8c8c;border-left:1px solid #eee"></div>
<div class="a" style="left:708px;top:75px;width:13px;height:1px;background:#bcbcbc;"></div>
<div class="a" style="left:702px;top:123px;width:25px;height:1px;background:#9a9a9a;"></div>
<div class="a" style="left:702px;top:124px;width:25px;height:1px;background:#f0f0f0;"></div>
<div class="a" style="left:708px;top:127px;width:13px;height:1px;background:#bcbcbc;"></div>
<div class="a" style="left:702px;top:197px;width:25px;height:1px;background:#9a9a9a;"></div>
<div class="a" style="left:702px;top:198px;width:25px;height:1px;background:#f0f0f0;"></div>
<div class="a" style="left:708px;top:201px;width:13px;height:1px;background:#bcbcbc;"></div>
<div class="a" style="left:702px;top:270px;width:25px;height:1px;background:#9a9a9a;"></div>
<div class="a" style="left:702px;top:271px;width:25px;height:1px;background:#f0f0f0;"></div>
<div class="a" style="left:708px;top:274px;width:13px;height:1px;background:#bcbcbc;"></div>
<div class="a" style="left:702px;top:302px;width:25px;height:1px;background:#9a9a9a;"></div>
<div class="a" style="left:702px;top:303px;width:25px;height:1px;background:#f0f0f0;"></div>
<div class="a" style="left:708px;top:306px;width:13px;height:1px;background:#bcbcbc;"></div>
<div class="a" style="left:702px;top:354px;width:25px;height:1px;background:#9a9a9a;"></div>
<div class="a" style="left:702px;top:355px;width:25px;height:1px;background:#f0f0f0;"></div>
<div class="a" style="left:708px;top:358px;width:13px;height:1px;background:#bcbcbc;"></div>
<svg style="left:707px;top:82px;" width="14" height="14" viewBox="0 0 16 16"><rect x="2" y="2" width="5" height="12" rx="1" fill="#777" stroke="#2e2e2e"/><path d="M9 4h4v4M13 4l-3 3M10 13q4-1 3-5" fill="none" stroke="#2e2e2e" stroke-width="1.5"/></svg>
<svg style="left:707px;top:104px;" width="14" height="14" viewBox="0 0 16 16"><rect x="1.5" y="2.5" width="13" height="11" fill="#c8c8c8" stroke="#666"/><polygon points="4,4.5 12,8 4,11.5" fill="#2e2e2e"/></svg>
<svg style="left:707px;top:135px;" width="14" height="14" viewBox="0 0 16 16"><g stroke="#2e2e2e" stroke-width="1.800"><path d="M8 1v14M1 8h14M3 3l10 10M13 3l-10 10"/></g><circle cx="8" cy="8" r="3.5" fill="#2e2e2e"/><circle cx="8" cy="8" r="1.5" fill="#ccc"/></svg>
<svg style="left:707px;top:156px;" width="14" height="14" viewBox="0 0 16 16"><rect x="1.5" y="2.5" width="13" height="11" fill="#eee" stroke="#555"/><polygon points="2,13 4,8 6,10 8,5 10,9 12,6 14,13" fill="#2e2e2e"/></svg>
<svg style="left:707px;top:178px;" width="14" height="14" viewBox="0 0 16 16"><circle cx="8" cy="8" r="6.5" fill="#444" stroke="#222"/><circle cx="8" cy="8" r="6" fill="none" stroke="#888" stroke-width=".6"/><path d="M8 7v4.5" stroke="#fff" stroke-width="2"/><circle cx="8" cy="4.5" r="1.200" fill="#fff"/></svg>
<svg style="left:707px;top:208px;" width="14" height="14" viewBox="0 0 16 16"><path d="M1 4h14M1 8h14M1 12h14" stroke="#2e2e2e" stroke-width="1.5"/><rect x="9" y="2" width="3" height="4" fill="#2e2e2e"/><rect x="3" y="6" width="3" height="4" fill="#2e2e2e"/><rect x="10" y="10" width="3" height="4" fill="#2e2e2e"/></svg>
<svg style="left:707px;top:228.5px;" width="14" height="14" viewBox="0 0 16 16"><path d="M8 1v10M8 8l-4-2v-3M8 9l4-2v-3" fill="none" stroke="#2e2e2e" stroke-width="1.5"/><rect x="5" y="10" width="6" height="5" fill="#eee" stroke="#2e2e2e" stroke-width="1.300"/><circle cx="4" cy="3" r="1.5" fill="#2e2e2e"/><rect x="10.5" y="2" width="3" height="3" fill="#2e2e2e"/></svg>
<svg style="left:707px;top:251px;" width="14" height="14" viewBox="0 0 16 16"><path d="M7 3h3l-.5 5h3v2.5h-8v-2.5h3z" fill="#2e2e2e"/><rect x="3" y="12" width="11" height="2" fill="#2e2e2e"/><path d="M1 3h4M1 5.5h4M1 8h3" stroke="#2e2e2e"/></svg>
<svg style="left:707px;top:281.5px;" width="14" height="14" viewBox="0 0 16 16"><path d="M11 2h-4a3 3 0 0 0 0 6h1v6M10.5 2v12" fill="none" stroke="#2e2e2e" stroke-width="1.600"/><path d="M7 2.5a2.5 2.5 0 0 0 0 5h1v-5z" fill="#2e2e2e"/></svg>
<svg style="left:707px;top:313px;" width="14" height="14" viewBox="0 0 16 16"><path d="M2 14l9-10M11 4l2-3 2 2-3 2" stroke="#2e2e2e" stroke-width="2" fill="none"/><path d="M3 2l10 11" stroke="#2e2e2e" stroke-width="2.200"/><circle cx="3.5" cy="3" r="2" fill="#2e2e2e"/></svg>
<svg style="left:707px;top:334px;" width="14" height="14" viewBox="0 0 16 16"><path d="M8 5l6 2.5-6 4-6-4z" fill="#2e2e2e"/><path d="M2 8.5v3l6 3.5 6-3.5v-3l-6 4z" fill="#555"/><path d="M8 1v5" stroke="#2e2e2e" stroke-width="1.5"/></svg>
<div class="t" style="left:706px;top:365.5px;font-size:14px;color:#2e2e2e;">A</div>
<div class="a" style="left:717px;top:367px;width:1px;height:12px;background:#2e2e2e;"></div>
<div class="a" style="left:728px;top:72px;width:174px;height:619px;background:#d6d6d6;"></div>
<div class="a" style="left:728px;top:72px;width:174px;height:12px;background:linear-gradient(#8c8c8c,#9a9a9a);"></div>
<div class="a" style="left:728px;top:71px;width:174px;height:1px;background:#3c3c3c;"></div>
<div class="a" style="left:729px;top:73px;width:23px;height:12px;background:#d6d6d6;border:1px solid #8a8a8a;border-bottom:none;border-top-color:#f0f0f0;border-left-color:#eee"></div>
<div class="t" style="left:733px;top:75px;font-size:7.8px;color:#333;transform-origin:0 50%;transform:scaleX(0.962);">颜色</div>
<div class="a" style="left:753px;top:73px;width:23px;height:11px;background:linear-gradient(#a6a6a6,#9e9e9e);border:1px solid #7c7c7c;border-bottom:none;border-left-color:#b4b4b4;border-top-color:#b0b0b0"></div>
<div class="t" style="left:757px;top:75px;font-size:7.8px;color:#484848;transform-origin:0 50%;transform:scaleX(0.962);">色板</div>
<div class="a" style="left:777px;top:73px;width:24px;height:11px;background:linear-gradient(#a6a6a6,#9e9e9e);border:1px solid #7c7c7c;border-bottom:none;border-left-color:#b4b4b4;border-top-color:#b0b0b0"></div>
<div class="t" style="left:781px;top:75px;font-size:7.8px;color:#484848;transform-origin:0 50%;transform:scaleX(1.026);">样式</div>
<svg style="left:890px;top:76px;" width="10" height="6" viewBox="0 0 10 6"><polygon points="0,1 3,1 1.5,3.5" fill="#444"/><path d="M4.5 0.5h5M4.5 2.5h5M4.5 4.5h5" stroke="#444" stroke-width="1"/></svg>
<div class="a" style="left:743px;top:102px;width:13px;height:13px;background:#fff;border:1px solid #9a9a9a"></div>
<div class="a" style="left:733px;top:92px;width:15px;height:15px;background:#000;border:1px solid #000;box-shadow:inset 0 0 0 1px #fff, 0 0 0 1px #d6d6d6"></div>
<div class="t" style="left:759.5px;top:94px;font-size:8.5px;color:#222;">R</div>
<div class="a" style="left:769px;top:95.5px;width:68px;height:4.5px;background:linear-gradient(90deg,#000,#e01818);border:1px solid #777;border-color:#333 #888 #888 #333"></div>
<svg style="left:766px;top:100px;" width="7" height="6" viewBox="0 0 7 6"><polygon points="3.5,0 6.5,5.5 0.5,5.5" fill="#e8e8e8" stroke="#444" stroke-width=".8"/></svg>
<div class="a" style="left:841px;top:91px;width:25px;height:14px;background:#fff;border:1px solid #c4c4c4"></div>
<div class="t" style="left:845px;top:93.5px;font-size:8.5px;color:#111;">0</div>
<div class="t" style="left:759.5px;top:112px;font-size:8.5px;color:#222;">G</div>
<div class="a" style="left:769px;top:113.5px;width:68px;height:4.5px;background:linear-gradient(90deg,#000,#18d018);border:1px solid #777;border-color:#333 #888 #888 #333"></div>
<svg style="left:766px;top:118px;" width="7" height="6" viewBox="0 0 7 6"><polygon points="3.5,0 6.5,5.5 0.5,5.5" fill="#e8e8e8" stroke="#444" stroke-width=".8"/></svg>
<div class="a" style="left:841px;top:109px;width:25px;height:14px;background:#fff;border:1px solid #c4c4c4"></div>
<div class="t" style="left:845px;top:111.5px;font-size:8.5px;color:#111;">0</div>
<div class="t" style="left:759.5px;top:130.5px;font-size:8.5px;color:#222;">B</div>
<div class="a" style="left:769px;top:132.0px;width:68px;height:4.5px;background:linear-gradient(90deg,#000,#1818e0);border:1px solid #777;border-color:#333 #888 #888 #333"></div>
<svg style="left:766px;top:136.5px;" width="7" height="6" viewBox="0 0 7 6"><polygon points="3.5,0 6.5,5.5 0.5,5.5" fill="#e8e8e8" stroke="#444" stroke-width=".8"/></svg>
<div class="a" style="left:841px;top:127.5px;width:25px;height:14px;background:#fff;border:1px solid #c4c4c4"></div>
<div class="t" style="left:845px;top:130.0px;font-size:8.5px;color:#111;">0</div>
<div class="a" style="left:733px;top:149px;width:141px;height:10px;background:linear-gradient(90deg,#f00,#ff0 17%,#0f0 33%,#0ff 50%,#00f 67%,#f0f 83%,#f00);"></div>
<div class="a" style="left:733px;top:149px;width:141px;height:10px;background:linear-gradient(rgba(255,255,255,.55),rgba(255,255,255,0) 45%,rgba(0,0,0,0) 55%,rgba(0,0,0,.85));"></div>
<div class="a" style="left:868px;top:149px;width:6px;height:5px;background:#fff;"></div>
<div class="a" style="left:868px;top:154px;width:6px;height:5px;background:#000;"></div>
<div class="a" style="left:728px;top:166px;width:174px;height:12px;background:linear-gradient(#8c8c8c,#9a9a9a);"></div>
<div class="a" style="left:728px;top:165px;width:174px;height:1px;background:#3c3c3c;"></div>
<div class="a" style="left:729px;top:167px;width:23px;height:11px;background:linear-gradient(#a6a6a6,#9e9e9e);border:1px solid #7c7c7c;border-bottom:none;border-left-color:#b4b4b4;border-top-color:#b0b0b0"></div>
<div class="t" style="left:733px;top:169px;font-size:7.8px;color:#484848;transform-origin:0 50%;transform:scaleX(0.962);">调整</div>
<div class="a" style="left:753px;top:167px;width:24px;height:12px;background:#d6d6d6;border:1px solid #8a8a8a;border-bottom:none;border-top-color:#f0f0f0;border-left-color:#eee"></div>
<div class="t" style="left:757px;top:169px;font-size:7.8px;color:#333;transform-origin:0 50%;transform:scaleX(1.026);">蒙版</div>
<svg style="left:890px;top:170px;" width="10" height="6" viewBox="0 0 10 6"><polygon points="0,1 3,1 1.5,3.5" fill="#444"/><path d="M4.5 0.5h5M4.5 2.5h5M4.5 4.5h5" stroke="#444" stroke-width="1"/></svg>
<div class="a" style="left:731px;top:180px;width:23px;height:22px;background:#000;border:1px solid #000"></div>
<div class="a" style="left:733px;top:196px;width:19px;height:4px;background:#fff;"></div>
<div class="a" style="left:735px;top:197.5px;width:15px;height:1px;background:#000;"></div>
<div class="a" style="left:730px;top:179px;width:25px;height:24px;background:transparent;border:1px solid #aaa"></div>
<div class="t" style="left:757px;top:187.5px;font-size:8.6px;color:#111;font-style:italic;">未选择蒙版</div>
<svg style="left:844px;top:186px;" width="11" height="11" viewBox="0 0 11 11"><rect x="1" y="1" width="9" height="9" fill="none" stroke="#444" stroke-dasharray="1.5 1"/><circle cx="5.5" cy="5.5" r="2.5" fill="#ddd" stroke="#444"/></svg>
<svg style="left:861px;top:186px;" width="12" height="11" viewBox="0 0 12 11"><path d="M2 7q-2-4 3-5t6 1q0 3-5 3l-2 3z" fill="none" stroke="#555" stroke-width="1.100"/></svg>
<div class="a" style="left:731px;top:206px;width:143px;height:1px;background:#bcbcbc;"></div>
<div class="a" style="left:731px;top:207px;width:143px;height:1px;background:#e8e8e8;"></div>
<div class="t" style="left:731px;top:215px;font-size:8px;color:#c0c0c0;transform-origin:0 50%;transform:scaleX(0.987);">浓度:</div>
<div class="a" style="left:837px;top:211px;width:39px;height:15px;background:#dadada;border:1px solid #c2c2c2"></div>
<div class="a" style="left:736px;top:231px;width:136px;height:1px;background:#c6c6c6;"></div>
<div class="a" style="left:736px;top:232px;width:136px;height:2px;background:#f0f0f0;"></div>
<div class="t" style="left:731px;top:243px;font-size:8px;color:#c0c0c0;transform-origin:0 50%;transform:scaleX(0.987);">羽化:</div>
<div class="a" style="left:837px;top:240px;width:39px;height:15px;background:#dadada;border:1px solid #c2c2c2"></div>
<div class="a" style="left:736px;top:259px;width:136px;height:1px;background:#c6c6c6;"></div>
<div class="a" style="left:736px;top:260px;width:136px;height:2px;background:#f0f0f0;"></div>
<div class="t" style="left:731px;top:272px;font-size:8px;color:#c0c0c0;transform-origin:0 50%;transform:scaleX(0.987);">调整:</div>
<div class="t" style="left:821px;top:271px;width:54px;height:12px;border:1px solid #c6c6c6;border-radius:3px;background:linear-gradient(#f4f4f4,#e6e6e6);color:#9a9a9a;font-size:8.6px;line-height:10px;text-align:center">蒙版边缘...</div>
<div class="t" style="left:821px;top:291px;width:54px;height:12px;border:1px solid #c6c6c6;border-radius:3px;background:linear-gradient(#f4f4f4,#e6e6e6);color:#9a9a9a;font-size:8.6px;line-height:10px;text-align:center">颜色范围...</div>
<div class="t" style="left:821px;top:310px;width:54px;height:12px;border:1px solid #c6c6c6;border-radius:3px;background:linear-gradient(#f4f4f4,#e6e6e6);color:#9a9a9a;font-size:8.6px;line-height:10px;text-align:center">反相</div>
<div class="a" style="left:731px;top:330px;width:143px;height:1px;background:#bcbcbc;"></div>
<div class="a" style="left:731px;top:331px;width:143px;height:1px;background:#e8e8e8;"></div>
<svg style="left:735px;top:331px;" width="9" height="9" viewBox="0 0 9 9"><circle cx="4.5" cy="4.5" r="3.5" fill="none" stroke="#c4c4c4" stroke-dasharray="1.5 1"/></svg>
<svg style="left:752px;top:331px;" width="12" height="9" viewBox="0 0 12 9"><path d="M1 4.5q5-5 10 0-5 5-10 0z" fill="#e4e4e4" stroke="#b0b0b0"/><circle cx="6" cy="4.5" r="1.5" fill="#b0b0b0"/></svg>
<svg style="left:773px;top:331px;" width="9" height="9" viewBox="0 0 9 9"><path d="M1 2h7l-1 6h-5z" fill="#c88" stroke="#b77"/></svg>
<svg style="left:864px;top:331px;" width="8" height="9" viewBox="0 0 8 9"><path d="M1 2.5h6l-.7 6h-4.600zM0 2h8M3 .8h2" fill="#ccc" stroke="#aaa"/></svg>
<div class="a" style="left:728px;top:344px;width:174px;height:1px;background:#3c3c3c;"></div>
<div class="a" style="left:728px;top:345px;width:174px;height:12px;background:linear-gradient(#8c8c8c,#9a9a9a);"></div>
<div class="a" style="left:728px;top:344px;width:174px;height:1px;background:#3c3c3c;"></div>
<div class="a" style="left:729px;top:346px;width:22px;height:12px;background:#d6d6d6;border:1px solid #8a8a8a;border-bottom:none;border-top-color:#f0f0f0;border-left-color:#eee"></div>
<div class="t" style="left:733px;top:348px;font-size:7.8px;color:#333;transform-origin:0 50%;transform:scaleX(0.898);">图层</div>
<div class="a" style="left:752px;top:346px;width:23px;height:11px;background:linear-gradient(#a6a6a6,#9e9e9e);border:1px solid #7c7c7c;border-bottom:none;border-left-color:#b4b4b4;border-top-color:#b0b0b0"></div>
<div class="t" style="left:756px;top:348px;font-size:7.8px;color:#484848;transform-origin:0 50%;transform:scaleX(0.962);">通道</div>
<div class="a" style="left:776px;top:346px;width:23px;height:11px;background:linear-gradient(#a6a6a6,#9e9e9e);border:1px solid #7c7c7c;border-bottom:none;border-left-color:#b4b4b4;border-top-color:#b0b0b0"></div>
<div class="t" style="left:780px;top:348px;font-size:7.8px;color:#484848;transform-origin:0 50%;transform:scaleX(0.962);">路径</div>
<svg style="left:890px;top:349px;" width="10" height="6" viewBox="0 0 10 6"><polygon points="0,1 3,1 1.5,3.5" fill="#444"/><path d="M4.5 0.5h5M4.5 2.5h5M4.5 4.5h5" stroke="#444" stroke-width="1"/></svg>
<div class="a" style="left:730px;top:360px;width:87px;height:16px;background:#fff;border:1px solid #bdbdbd"></div>
<div class="t" style="left:735.5px;top:363.5px;font-size:8.5px;color:#111;transform-origin:0 50%;transform:scaleX(0.911);">滤色</div>
<svg style="left:808px;top:366px;" width="5" height="3" viewBox="0 0 5 3"><polygon points="0,0 5,0 2.5,3" fill="#111"/></svg>
<div class="t" style="left:820px;top:362.5px;font-size:8.5px;color:#111;transform-origin:0 50%;transform:scaleX(0.990);">不透明度:</div>
<div class="a" style="left:858.5px;top:360px;width:28.5px;height:13px;background:#fff;border:1px solid #c8c8c8"></div>
<div class="t" style="left:861.5px;top:362.5px;font-size:8.5px;color:#111;transform-origin:0 50%;transform:scaleX(0.874);">100%</div>
<div class="a" style="left:888.5px;top:360px;width:9.5px;height:13px;background:#e2e2e2;border:1px solid #c0c0c0;border-radius:1px"></div>
<svg style="left:892px;top:365px;" width="3" height="4" viewBox="0 0 3 4"><polygon points="0,0 3,2 0,4" fill="#666"/></svg>
<div class="t" style="left:733px;top:382.5px;font-size:8.5px;color:#111;transform-origin:0 50%;transform:scaleX(0.981);">锁定:</div>
<svg style="left:756px;top:381px;" width="10" height="10" viewBox="0 0 10 10"><rect x=".5" y=".5" width="9" height="9" fill="#eee" stroke="#999"/><path d="M0 0h5v5h-5zM5 5h5v5h-5z" fill="#bbb" opacity=".7"/></svg>
<svg style="left:769px;top:381px;" width="10" height="10" viewBox="0 0 10 10"><path d="M1 9l2-3 5-5 1 1-5 5z" fill="#444"/></svg>
<svg style="left:782px;top:381px;" width="10" height="10" viewBox="0 0 10 10"><path d="M5 0v10M0 5h10" stroke="#333" stroke-width="1.400"/><path d="M5 0l-1.5 2h3zM5 10l-1.5-2h3zM0 5l2-1.5v3zM10 5l-2-1.5v3z" fill="#333"/></svg>
<svg style="left:796px;top:381px;" width="8" height="10" viewBox="0 0 8 10"><rect x=".5" y="4" width="7" height="5.5" fill="#333"/><path d="M2 4v-1.5a2 2 0 0 1 4 0v1.5" fill="none" stroke="#333" stroke-width="1.200"/></svg>
<div class="t" style="left:836.5px;top:382.5px;font-size:8.5px;color:#111;transform-origin:0 50%;transform:scaleX(0.981);">填充:</div>
<div class="a" style="left:858.5px;top:380px;width:28.5px;height:12.5px;background:#fff;border:1px solid #c8c8c8"></div>
<div class="t" style="left:861.5px;top:382.5px;font-size:8.5px;color:#111;transform-origin:0 50%;transform:scaleX(0.895);">0%</div>
<div class="a" style="left:888.5px;top:380px;width:9.5px;height:12.5px;background:#e2e2e2;border:1px solid #c0c0c0;border-radius:1px"></div>
<svg style="left:892px;top:384.5px;" width="3" height="4" viewBox="0 0 3 4"><polygon points="0,0 3,2 0,4" fill="#666"/></svg>
<div class="a" style="left:728px;top:394px;width:174px;height:1px;background:#9c9c9c;"></div>
<div class="a" style="left:729px;top:395px;width:162px;height:283px;background:#d9d9d9;"></div>
<div class="a" style="left:745px;top:395px;width:1px;height:283px;background:#b4b4b4;"></div>
<svg style="left:732.5px;top:407px;" width="9" height="6" viewBox="0 0 9 6"><path d="M0 3q4.5-5 9 0-4.5 4-9 0z" fill="#1c1c1c"/><circle cx="4.5" cy="2.600" r="1.100" fill="#888"/></svg>
<div class="a" style="left:747px;top:398px;width:19px;height:23px;background:#fff;border:1px solid #222"></div>
<div class="a" style="left:748px;top:405px;width:17px;height:15px;background:repeating-conic-gradient(#d0d0d0 0 25%,#fff 0 50%) 0 0/6px 6px"></div>
<svg style="left:753px;top:400px;" width="6" height="6" viewBox="0 0 6 6"><circle cx="3" cy="3" r="2.5" fill="#000"/></svg>
<div class="t" style="left:769.5px;top:405.5px;font-size:8.5px;color:#111;transform-origin:0 50%;transform:scaleX(0.996);">图层 1</div>
<div class="t" style="left:871px;top:404.5px;font-size:10px;color:#222;font-family:'Liberation Serif',serif;font-style:italic;font-weight:bold;">fx</div>
<svg style="left:884px;top:409px;" width="5" height="3" viewBox="0 0 5 3"><polygon points="0,0 5,0 2.5,3" fill="#222"/></svg>
<svg style="left:758.5px;top:427px;" width="9" height="6" viewBox="0 0 9 6"><path d="M0 3q4.5-5 9 0-4.5 4-9 0z" fill="#1c1c1c"/><circle cx="4.5" cy="2.600" r="1.100" fill="#888"/></svg>
<div class="t" style="left:771px;top:426px;font-size:8.5px;color:#111;transform-origin:0 50%;transform:scaleX(0.976);">效果</div>
<div class="a" style="left:769px;top:437px;width:121px;height:1px;background:#a8a8a8;"></div>
<svg style="left:771.5px;top:440.5px;" width="9" height="6" viewBox="0 0 9 6"><path d="M0 3q4.5-5 9 0-4.5 4-9 0z" fill="#1c1c1c"/><circle cx="4.5" cy="2.600" r="1.100" fill="#888"/></svg>
<div class="t" style="left:784px;top:439.0px;font-size:8.5px;color:#111;transform-origin:0 50%;transform:scaleX(0.981);">投影</div>
<div class="a" style="left:769px;top:450px;width:121px;height:1px;background:#a8a8a8;"></div>
<svg style="left:771.5px;top:454.0px;" width="9" height="6" viewBox="0 0 9 6"><path d="M0 3q4.5-5 9 0-4.5 4-9 0z" fill="#1c1c1c"/><circle cx="4.5" cy="2.600" r="1.100" fill="#888"/></svg>
<div class="t" style="left:784px;top:452.5px;font-size:8.5px;color:#111;transform-origin:0 50%;transform:scaleX(0.982);">内阴影</div>
<div class="a" style="left:769px;top:464px;width:121px;height:1px;background:#a8a8a8;"></div>
<svg style="left:771.5px;top:467.5px;" width="9" height="6" viewBox="0 0 9 6"><path d="M0 3q4.5-5 9 0-4.5 4-9 0z" fill="#1c1c1c"/><circle cx="4.5" cy="2.600" r="1.100" fill="#888"/></svg>
<div class="t" style="left:784px;top:466.0px;font-size:8.5px;color:#111;transform-origin:0 50%;transform:scaleX(0.982);">斜面和浮雕</div>
<div class="a" style="left:769px;top:478px;width:121px;height:1px;background:#a8a8a8;"></div>
<svg style="left:771.5px;top:481.0px;" width="9" height="6" viewBox="0 0 9 6"><path d="M0 3q4.5-5 9 0-4.5 4-9 0z" fill="#1c1c1c"/><circle cx="4.5" cy="2.600" r="1.100" fill="#888"/></svg>
<div class="t" style="left:784px;top:479.5px;font-size:8.5px;color:#111;transform-origin:0 50%;transform:scaleX(0.981);">描边</div>
<div class="a" style="left:729px;top:490px;width:162px;height:1px;background:#a2a2a2;"></div>
<div class="a" style="left:729px;top:491px;width:162px;height:1px;background:#e9e9e9;"></div>
<svg style="left:732.5px;top:501px;" width="9" height="6" viewBox="0 0 9 6"><path d="M0 3q4.5-5 9 0-4.5 4-9 0z" fill="#1c1c1c"/><circle cx="4.5" cy="2.600" r="1.100" fill="#888"/></svg>
<div class="a" style="left:747.5px;top:493px;width:23px;height:22px;background:#000;border:1px solid #000"></div>
<div class="a" style="left:749px;top:508px;width:21px;height:6px;background:#fff;"></div>
<div class="a" style="left:751px;top:510px;width:17px;height:2px;background:#fff;border:1px solid #222"></div>
<svg style="left:774px;top:499px;" width="4" height="10" viewBox="0 0 4 10"><path d="M2 0v3M2 7v3" stroke="#666"/><rect x=".5" y="2.5" width="3" height="5" rx="1.5" fill="none" stroke="#666"/></svg>
<div class="a" style="left:780.5px;top:493px;width:18px;height:22px;background:#808080;border:1px solid #222"></div>
<div class="a" style="left:792px;top:507px;width:3px;height:3px;background:#111;border-radius:50%"></div>
<div class="t" style="left:803px;top:499.5px;font-size:8.5px;color:#111;transform-origin:0 50%;transform:scaleX(0.996);">形状 6</div>
<div class="a" style="left:729px;top:518px;width:162px;height:1px;background:#a2a2a2;"></div>
<div class="a" style="left:729px;top:519px;width:162px;height:1px;background:#e9e9e9;"></div>
<svg style="left:732.5px;top:528.5px;" width="9" height="6" viewBox="0 0 9 6"><path d="M0 3q4.5-5 9 0-4.5 4-9 0z" fill="#1c1c1c"/><circle cx="4.5" cy="2.600" r="1.100" fill="#888"/></svg>
<div class="a" style="left:747.5px;top:521px;width:23px;height:22px;background:#000;border:1px solid #000"></div>
<div class="a" style="left:749px;top:536px;width:21px;height:6px;background:#fff;"></div>
<div class="a" style="left:751px;top:538px;width:17px;height:2px;background:#fff;border:1px solid #222"></div>
<svg style="left:774px;top:527px;" width="4" height="10" viewBox="0 0 4 10"><path d="M2 0v3M2 7v3" stroke="#666"/><rect x=".5" y="2.5" width="3" height="5" rx="1.5" fill="none" stroke="#666"/></svg>
<div class="a" style="left:780.5px;top:521px;width:18px;height:22px;background:#808080;border:1px solid #222"></div>
<div class="a" style="left:789px;top:537px;width:3px;height:3px;background:#111;border-radius:50%"></div>
<div class="t" style="left:803px;top:527.5px;font-size:8.5px;color:#111;transform-origin:0 50%;transform:scaleX(0.996);">形状 5</div>
<div class="a" style="left:729px;top:545px;width:162px;height:1px;background:#a2a2a2;"></div>
<div class="a" style="left:729px;top:546px;width:162px;height:1px;background:#e9e9e9;"></div>
<svg style="left:732.5px;top:556px;" width="9" height="6" viewBox="0 0 9 6"><path d="M0 3q4.5-5 9 0-4.5 4-9 0z" fill="#1c1c1c"/><circle cx="4.5" cy="2.600" r="1.100" fill="#888"/></svg>
<div class="a" style="left:747.5px;top:548px;width:23px;height:22px;background:#000;border:1px solid #000"></div>
<div class="a" style="left:749px;top:563px;width:21px;height:6px;background:#fff;"></div>
<div class="a" style="left:751px;top:565px;width:17px;height:2px;background:#fff;border:1px solid #222"></div>
<svg style="left:774px;top:554px;" width="4" height="10" viewBox="0 0 4 10"><path d="M2 0v3M2 7v3" stroke="#666"/><rect x=".5" y="2.5" width="3" height="5" rx="1.5" fill="none" stroke="#666"/></svg>
<div class="a" style="left:780.5px;top:548px;width:18px;height:22px;background:#808080;border:1px solid #222"></div>
<div class="a" style="left:783px;top:564px;width:3px;height:3px;background:#111;border-radius:50%"></div>
<div class="t" style="left:803px;top:554.5px;font-size:8.5px;color:#111;transform-origin:0 50%;transform:scaleX(0.996);">形状 4</div>
<div class="a" style="left:729px;top:572px;width:162px;height:1px;background:#a2a2a2;"></div>
<div class="a" style="left:729px;top:573px;width:162px;height:1px;background:#e9e9e9;"></div>
<svg style="left:732.5px;top:583.5px;" width="9" height="6" viewBox="0 0 9 6"><path d="M0 3q4.5-5 9 0-4.5 4-9 0z" fill="#1c1c1c"/><circle cx="4.5" cy="2.600" r="1.100" fill="#888"/></svg>
<div class="a" style="left:747.5px;top:575px;width:23px;height:22px;background:#000;border:1px solid #000"></div>
<div class="a" style="left:749px;top:590px;width:21px;height:6px;background:#fff;"></div>
<div class="a" style="left:751px;top:592px;width:17px;height:2px;background:#fff;border:1px solid #222"></div>
<svg style="left:774px;top:581px;" width="4" height="10" viewBox="0 0 4 10"><path d="M2 0v3M2 7v3" stroke="#666"/><rect x=".5" y="2.5" width="3" height="5" rx="1.5" fill="none" stroke="#666"/></svg>
<div class="a" style="left:780.5px;top:575px;width:18px;height:22px;background:#808080;border:1px solid #222"></div>
<div class="a" style="left:793px;top:587px;width:3px;height:3px;background:#111;border-radius:50%"></div>
<div class="t" style="left:803px;top:581.5px;font-size:8.5px;color:#111;transform-origin:0 50%;transform:scaleX(0.996);">形状 3</div>
<div class="a" style="left:729px;top:600px;width:162px;height:1px;background:#a2a2a2;"></div>
<div class="a" style="left:729px;top:601px;width:162px;height:1px;background:#e9e9e9;"></div>
<svg style="left:732.5px;top:611px;" width="9" height="6" viewBox="0 0 9 6"><path d="M0 3q4.5-5 9 0-4.5 4-9 0z" fill="#1c1c1c"/><circle cx="4.5" cy="2.600" r="1.100" fill="#888"/></svg>
<div class="a" style="left:747.5px;top:603px;width:23px;height:22px;background:#000;border:1px solid #000"></div>
<div class="a" style="left:749px;top:618px;width:21px;height:6px;background:#fff;"></div>
<div class="a" style="left:751px;top:620px;width:17px;height:2px;background:#fff;border:1px solid #222"></div>
<svg style="left:774px;top:609px;" width="4" height="10" viewBox="0 0 4 10"><path d="M2 0v3M2 7v3" stroke="#666"/><rect x=".5" y="2.5" width="3" height="5" rx="1.5" fill="none" stroke="#666"/></svg>
<div class="a" style="left:780.5px;top:603px;width:18px;height:22px;background:#808080;border:1px solid #222"></div>
<div class="a" style="left:785px;top:608px;width:3px;height:3px;background:#111;border-radius:50%"></div>
<div class="t" style="left:803px;top:609.5px;font-size:8.5px;color:#111;transform-origin:0 50%;transform:scaleX(0.996);">形状 2</div>
<div class="a" style="left:746px;top:627px;width:145px;height:28px;background:#3399ff;"></div>
<div class="a" style="left:729px;top:627px;width:162px;height:1px;background:#a2a2a2;"></div>
<svg style="left:732.5px;top:638px;" width="9" height="6" viewBox="0 0 9 6"><path d="M0 3q4.5-5 9 0-4.5 4-9 0z" fill="#1c1c1c"/><circle cx="4.5" cy="2.600" r="1.100" fill="#888"/></svg>
<div class="a" style="left:747.5px;top:630px;width:23px;height:22px;background:#000;border:1px solid #000"></div>
<div class="a" style="left:749px;top:645px;width:21px;height:6px;background:#fff;"></div>
<div class="a" style="left:751px;top:647px;width:17px;height:2px;background:#fff;border:1px solid #222"></div>
<svg style="left:774px;top:636px;" width="4" height="10" viewBox="0 0 4 10"><path d="M2 0v3M2 7v3" stroke="#666"/><rect x=".5" y="2.5" width="3" height="5" rx="1.5" fill="none" stroke="#666"/></svg>
<div class="a" style="left:780.5px;top:630px;width:18px;height:22px;background:#808080;border:1px solid #222"></div>
<div class="a" style="left:788px;top:644px;width:3px;height:3px;background:#111;border-radius:50%"></div>
<div class="t" style="left:803px;top:636.5px;font-size:8.5px;color:#fff;transform-origin:0 50%;transform:scaleX(0.996);">形状 1</div>
<div class="t" style="left:871px;top:636.5px;font-size:10px;color:#123;font-family:'Liberation Serif',serif;font-style:italic;font-weight:bold;">fx</div>
<div class="a" style="left:881px;top:629px;width:9px;height:25px;background:#7ab6f5;"></div>
<svg style="left:884px;top:641px;" width="5" height="3" viewBox="0 0 5 3"><polygon points="0,0 5,0 2.5,3" fill="#123"/></svg>
<div class="a" style="left:729px;top:655px;width:162px;height:1px;background:#a2a2a2;"></div>
<svg style="left:759.5px;top:658px;" width="9" height="6" viewBox="0 0 9 6"><path d="M0 3q4.5-5 9 0-4.5 4-9 0z" fill="#1c1c1c"/><circle cx="4.5" cy="2.600" r="1.100" fill="#888"/></svg>
<div class="t" style="left:772px;top:657px;font-size:8.5px;color:#111;transform-origin:0 50%;transform:scaleX(0.976);">效果</div>
<svg style="left:771.5px;top:671.5px;" width="9" height="6" viewBox="0 0 9 6"><path d="M0 3q4.5-5 9 0-4.5 4-9 0z" fill="#1c1c1c"/><circle cx="4.5" cy="2.600" r="1.100" fill="#888"/></svg>
<div class="t" style="left:784px;top:670.5px;font-size:8.5px;color:#111;transform-origin:0 50%;transform:scaleX(0.976);">投影</div>
<div class="a" style="left:891px;top:395px;width:9px;height:283px;background:#e9e9e9;border-left:1px solid #c4c4c4"></div>
<div class="a" style="left:892px;top:410px;width:8px;height:200px;background:linear-gradient(90deg,#f6f6f6,#dcdcdc);border:1px solid #bdbdbd;border-radius:2px"></div>
<svg style="left:893px;top:400px;" width="6" height="5" viewBox="0 0 6 5"><polygon points="3,0 6,4 0,4" fill="#555"/></svg>
<svg style="left:893px;top:671px;" width="6" height="5" viewBox="0 0 6 5"><polygon points="0,0 6,0 3,4" fill="#555"/></svg>
<div class="a" style="left:893px;top:508px;width:6px;height:1px;background:#aaa;"></div>
<div class="a" style="left:893px;top:510px;width:6px;height:1px;background:#aaa;"></div>
<div class="a" style="left:893px;top:512px;width:6px;height:1px;background:#aaa;"></div>
<div class="a" style="left:728px;top:679px;width:174px;height:13px;background:linear-gradient(#dcdcdc,#c9c9c9);border-top:1px solid #9c9c9c"></div>
<svg style="left:762px;top:682px;" width="10" height="6" viewBox="0 0 10 6"><rect x=".5" y="1" width="4" height="4" rx="2" fill="none" stroke="#aaa"/><rect x="5" y="1" width="4" height="4" rx="2" fill="none" stroke="#aaa"/></svg>
<div class="t" style="left:780px;top:679px;font-size:10.5px;color:#222;font-family:'Liberation Serif',serif;font-style:italic;font-weight:bold;">fx</div>
<svg style="left:800px;top:681px;" width="9" height="8" viewBox="0 0 9 8"><rect x=".5" y=".5" width="8" height="7" fill="#555" stroke="#222"/><circle cx="4.5" cy="4" r="2" fill="#eee"/></svg>
<svg style="left:820px;top:681px;" width="9" height="9" viewBox="0 0 9 9"><circle cx="4.5" cy="4.5" r="3.800" fill="#fff" stroke="#222"/><path d="M4.5 .7a3.800 3.800 0 0 0 0 7.600z" fill="#222"/></svg>
<svg style="left:840px;top:682px;" width="9" height="7" viewBox="0 0 9 7"><path d="M.5 1.5h3l1 1h4v4h-8z" fill="#eee" stroke="#333"/></svg>
<svg style="left:858px;top:681px;" width="8" height="8" viewBox="0 0 8 8"><path d="M.5 .5h7v7h-7zM2.5 2.5h5" fill="#f4f4f4" stroke="#333"/></svg>
<svg style="left:878px;top:680px;" width="8" height="10" viewBox="0 0 8 10"><path d="M1 3h6l-.7 6.5h-4.600zM0 2.5h8M3 1h2" fill="#ccc" stroke="#333"/></svg>
<div class="t" style="left:696.5px;top:620.5px;font-size:34px;color:rgba(255,255,255,.88);font-weight:bold;transform-origin:0 50%;transform:scaleX(0.879);">Bai</div>
<svg style="left:749px;top:600px;" width="48" height="54" viewBox="0 0 48 54"><g fill="rgba(255,255,255,.7)"><circle cx="8" cy="14.5" r="5.200"/><circle cx="18.5" cy="8" r="5.600"/><circle cx="34.5" cy="8.5" r="5.600"/><circle cx="43" cy="19.5" r="5"/><path d="M24 21q8 0 13 9 8 10 5 16-4 6-18 5-14 1-18-5-3-6 5-16 5-9 13-9z"/></g></svg>
<div class="t" style="left:757px;top:628px;font-size:22px;color:rgba(40,50,80,.75);font-weight:bold;transform-origin:0 50%;transform:scaleX(1.116);">du</div>
<div class="t" style="left:799.5px;top:625.5px;font-size:27px;color:rgba(255,255,255,.92);font-weight:bold;transform-origin:0 50%;transform:scaleX(1.000);">经验</div>
<div class="t" style="left:692px;top:655.5px;font-size:18px;color:rgba(255,255,255,.84);transform-origin:0 50%;transform:scaleX(1.123);">jingyan.baidu.com</div>
<div class="a" style="left:0px;top:691px;width:904px;height:1px;background:#8a8a8a;"></div>
<div class="a" style="left:0px;top:692px;width:904px;height:3px;background:#c3cfdc;"></div>
</body></html>
